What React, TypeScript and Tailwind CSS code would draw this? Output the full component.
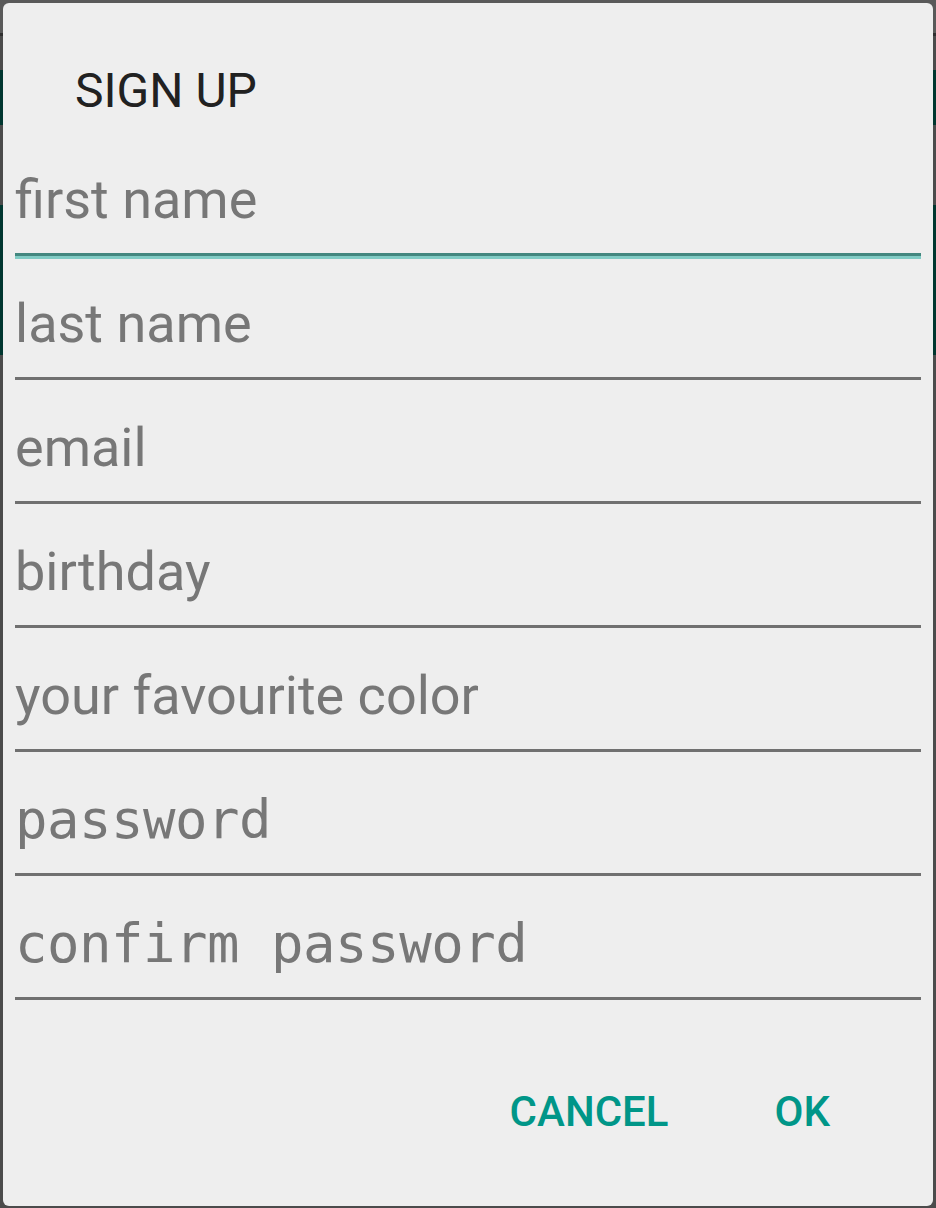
import React from 'react';

const fields = [
  { label: 'first name', mono: false, focused: true },
  { label: 'last name', mono: false },
  { label: 'email', mono: false },
  { label: 'birthday', mono: false },
  { label: 'your favourite color', mono: false },
  { label: 'password', mono: true },
  { label: 'confirm password', mono: true },
];

export default function App() {
  return (
    <div className="relative w-[936px] h-[1208px] overflow-hidden bg-[#4b4b4b]">
      {/* dimmed app behind the dialog */}
      <div className="flex flex-col">
        <div className="h-[33px] bg-[#595959]" />
        <div className="h-[3px] bg-[#2f2f2f]" />
        <div className="h-[34px] bg-[#4b4b4b]" />
        <div className="h-[55px] bg-[#00362f]" />
        <div className="h-[80px] bg-[#4b4b4b]" />
        <div className="h-[150px] bg-[#00362f]" />
      </div>

      {/* Dialog */}
      <div className="absolute left-[3px] top-[3px] w-[930px] h-[1203px] rounded-[6px] bg-[#eeeeee] flex flex-col font-['Roboto',sans-serif]">
        <div className="pt-[60px] pl-[72px] text-[48px] leading-[56px] text-[#212121]">SIGN UP</div>

        <div className="mt-[49px] px-[12px] flex flex-col">
          {fields.map((f) => (
            <div key={f.label} className="flex flex-col">
              <div
                className={`h-[64px] text-[54px] leading-[64px] text-[#777777] whitespace-nowrap ${
                  f.mono ? "font-['DejaVu_Sans_Mono',monospace] tracking-[-0.5px]" : ''
                }`}
              >
                {f.label}
              </div>
              <div
                className={`mt-[21px] h-[3px] ${
                  f.focused ? 'bg-[#43877f] shadow-[0_3px_0_#80cbc4]' : 'bg-[#707070]'
                }`}
              />
              <div className="h-[36px]" />
            </div>
          ))}
        </div>

        <div className="-mt-[36px] pt-[88px] pr-[103px] flex justify-end gap-[106px] text-[42px] leading-[48px] font-medium text-[#009688]">
          <button className="leading-[48px]">CANCEL</button>
          <button className="leading-[48px]">OK</button>
        </div>
      </div>
    </div>
  );
}
